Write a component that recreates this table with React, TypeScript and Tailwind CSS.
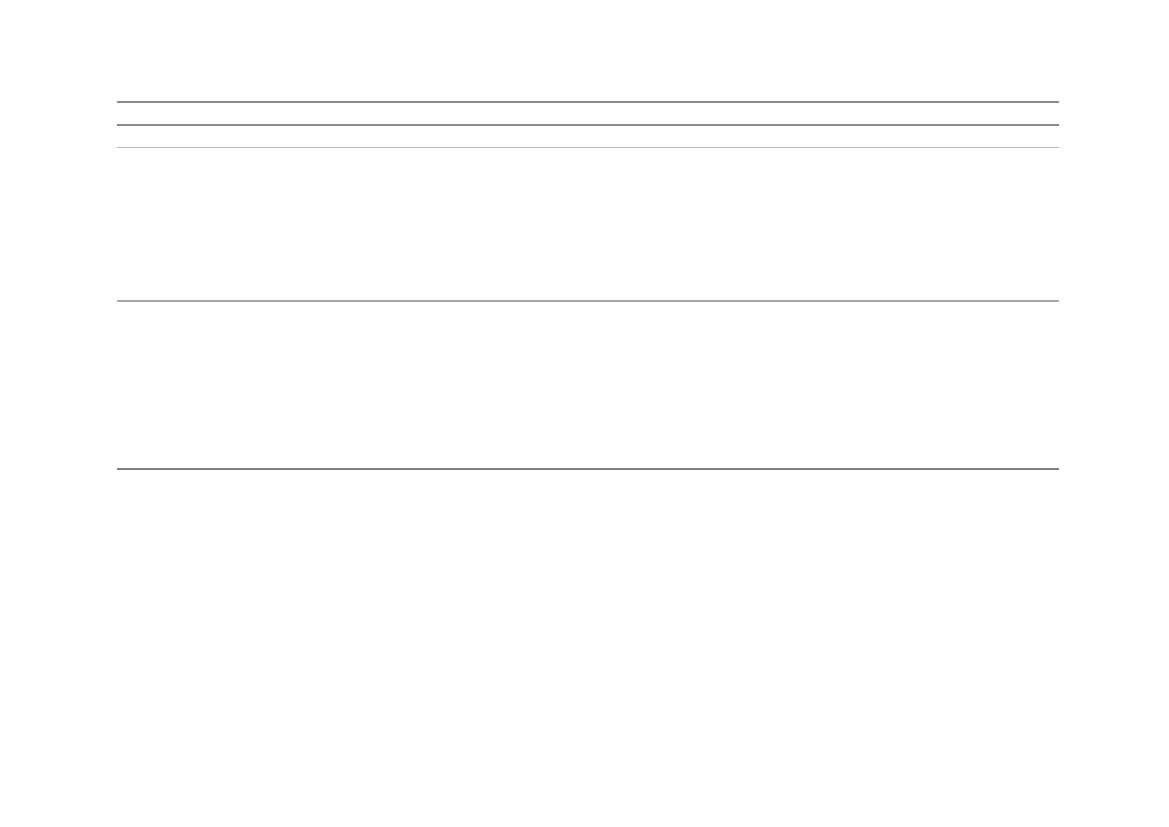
export default function App() {
  const cols = "grid grid-cols-[328px_368px_120px_126px]";
  return (
    <div className="w-[1169px] h-[827px] bg-white pt-[101px] pl-[117px] font-['Liberation_Sans',sans-serif]">
      <div className="w-[942px] flex flex-col">
        <div className={`${cols} h-[25px] border-t-2 border-b-2 border-[#8c8c8c]`}>
          <div />
          <div />
          <div />
          <div />
        </div>
        <div className={`${cols} h-[22px] border-b border-[#b4b4b4]`}>
          <div />
          <div />
          <div />
          <div />
        </div>
        <div className={`${cols} h-[154px] border-b-2 border-[#a6a6a6]`}>
          <div />
          <div />
          <div />
          <div />
        </div>
        <div className={`${cols} h-[168px] border-b-2 border-[#808080]`}>
          <div />
          <div />
          <div />
          <div />
        </div>
      </div>
    </div>
  );
}
